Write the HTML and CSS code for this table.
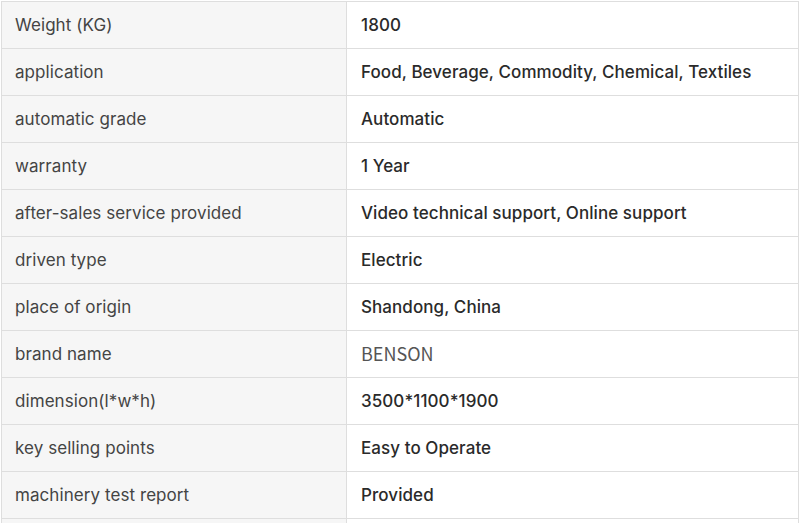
FILE: index.html
```html
<!DOCTYPE html>
<html>
<head>
<meta charset="utf-8">
<link rel="stylesheet" href="styles.css">
</head>
<body>
<table class="spec">
  <tbody>
    <tr><td class="k">Weight (KG)</td><td class="v">1800</td></tr>
    <tr><td class="k">application</td><td class="v">Food, Beverage, Commodity, Chemical, Textiles</td></tr>
    <tr><td class="k">automatic grade</td><td class="v">Automatic</td></tr>
    <tr><td class="k">warranty</td><td class="v">1 Year</td></tr>
    <tr><td class="k">after-sales service provided</td><td class="v">Video technical support, Online support</td></tr>
    <tr><td class="k">driven type</td><td class="v">Electric</td></tr>
    <tr><td class="k">place of origin</td><td class="v">Shandong, China</td></tr>
    <tr><td class="k">brand name</td><td class="v"><span class="brand">BENSON</span></td></tr>
    <tr><td class="k">dimension(l*w*h)</td><td class="v">3500*1100*1900</td></tr>
    <tr><td class="k">key selling points</td><td class="v">Easy to Operate</td></tr>
    <tr><td class="k">machinery test report</td><td class="v">Provided</td></tr>
    <tr><td class="k">&nbsp;</td><td class="v">&nbsp;</td></tr>
  </tbody>
</table>
</body>
</html>
```

FILE: styles.css
```css
html, body {
  margin: 0;
  padding: 0;
  background: #fff;
  overflow: hidden;
}
body {
  padding: 1px 0 0 1px;
  font-family: Inter, "Noto Sans", sans-serif;
  font-size: 17px;
  letter-spacing: 0.07px;
}
.spec {
  border-collapse: collapse;
  width: 798px;
  table-layout: fixed;
}
.spec td {
  border: 1px solid #dedede;
  height: 47px;
  box-sizing: border-box;
  padding: 0 14px;
  vertical-align: middle;
  line-height: 20px;
  white-space: nowrap;
}
.k {
  width: 345px;
  padding-left: 13px !important;
  background: #f6f6f6;
  color: #444;
  font-weight: 400;
}
.v {
  background: #fff;
  color: #2a2a2a;
  font-weight: 500;
}
.brand {
  font-family: "Noto Sans CJK SC", sans-serif;
  font-size: 18px;
  font-weight: 400;
  letter-spacing: 0;
  color: #555;
}
```
